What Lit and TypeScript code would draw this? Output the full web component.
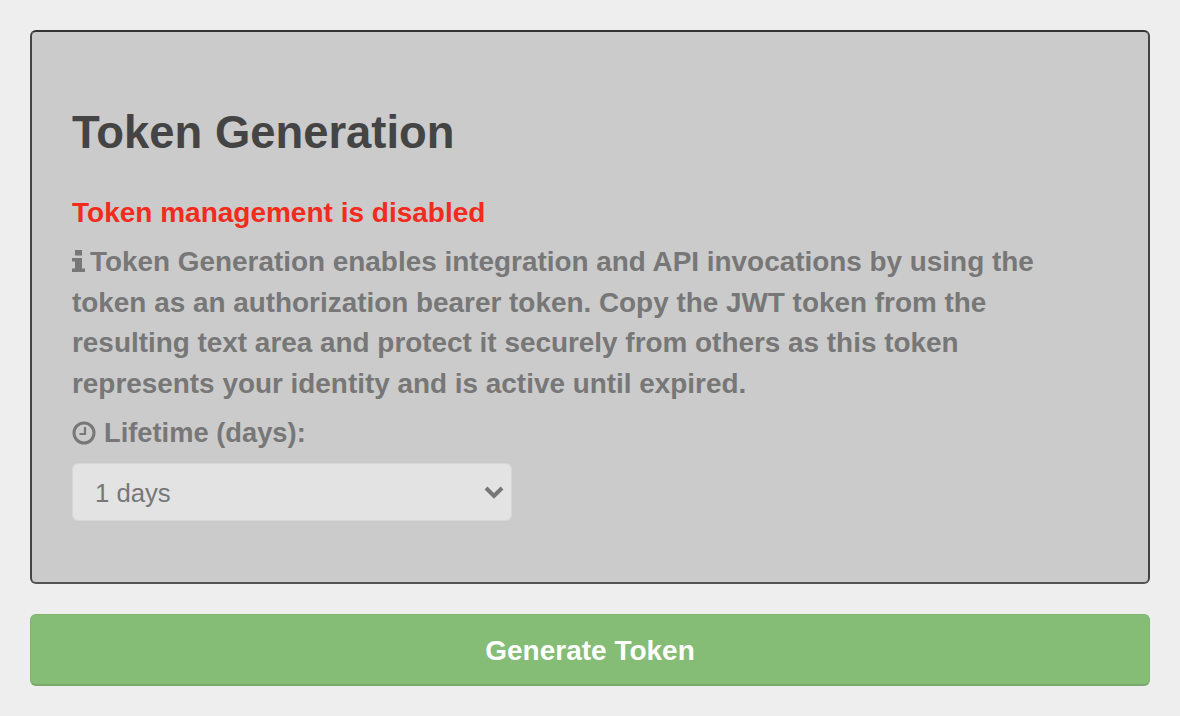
import { LitElement, html, css } from "lit";
import { customElement } from "lit/decorators.js";

@customElement("app-root")
export class AppRoot extends LitElement {
  static styles = css`
    :host {
      display: block;
      box-sizing: border-box;
      height: 716px;
      padding: 30px;
      background: #eeeeee;
      font-family: "Liberation Sans", Arial, sans-serif;
      overflow: hidden;
    }
    .card {
      box-sizing: border-box;
      height: 554px;
      background: #cbcbcb;
      border: 2px solid #444;
      border-top-color: #333;
      border-bottom-color: #555;
      border-radius: 6px;
      padding: 72px 40px 0;
    }
    h1 {
      margin: 0;
      font-size: 45.4px;
      line-height: 58px;
      font-weight: 700;
      color: #444444;
    }
    .err {
      margin-top: 31px;
      font-size: 28px;
      line-height: 40px;
      font-weight: 700;
      color: #f12b1d;
    }
    .desc {
      margin: 9px 0 0;
      max-width: 980px;
      font-size: 27.9px;
      line-height: 40.5px;
      font-weight: 700;
      color: #777777;
    }
    .info { width: 13px; height: 22px; margin-right: 5px; vertical-align: -1px; }
    .life {
      display: flex;
      align-items: center;
      gap: 8px;
      margin-top: 9px;
      font-size: 27.3px;
      line-height: 40px;
      font-weight: 700;
      color: #777777;
    }
    .clock { width: 24px; height: 24px; }
    .select {
      box-sizing: border-box;
      display: flex;
      align-items: center;
      justify-content: space-between;
      width: 440px;
      height: 58px;
      margin-top: 10px;
      padding: 0 7px 0 22px;
      background: #e3e3e3;
      border: 1px solid #d6d6d6;
      border-radius: 6px;
      font-size: 25.7px;
      color: #777777;
    }
    .value { padding-top: 3px; }
    .chev { width: 20px; height: 14px; }
    .btn {
      display: flex;
      align-items: center;
      justify-content: center;
      box-sizing: border-box;
      height: 72px;
      margin-top: 30px;
      padding-top: 2px;
      background: #85bc76;
      border: 1px solid #7fb46f;
      border-bottom: 2px solid #7aa96c;
      border-radius: 6px;
      font-size: 28px;
      font-weight: 700;
      color: #ffffff;
    }
  `;

  render() {
    return html`
      <div class="card">
        <h1>Token Generation</h1>
        <div class="err">Token management is disabled</div>
        <p class="desc">
          <svg class="info" viewBox="0 0 13 22"><path fill="#777" d="M3 0h7v5.500H3zM0 8h10v10.500h3V22H0v-3.500h3V11.500H0z"/></svg>Token Generation enables integration and API invocations by using the token as an authorization bearer token. Copy the JWT token from the resulting text area and protect it securely from others as this token represents your identity and is active until expired.
        </p>
        <div class="life">
          <svg class="clock" viewBox="0 0 24 24"><circle cx="12" cy="12" r="10" fill="none" stroke="#777" stroke-width="3"/><path fill="none" stroke="#777" stroke-width="2.200" d="M13 6v7H7.500"/></svg>
          <span>Lifetime (days):</span>
        </div>
        <div class="select">
          <span class="value">1 days</span>
          <svg class="chev" viewBox="0 0 20 14"><path fill="none" stroke="#777" stroke-width="4" d="M2 3l8 8 8-8"/></svg>
        </div>
      </div>
      <div class="btn">Generate Token</div>
    `;
  }
}
